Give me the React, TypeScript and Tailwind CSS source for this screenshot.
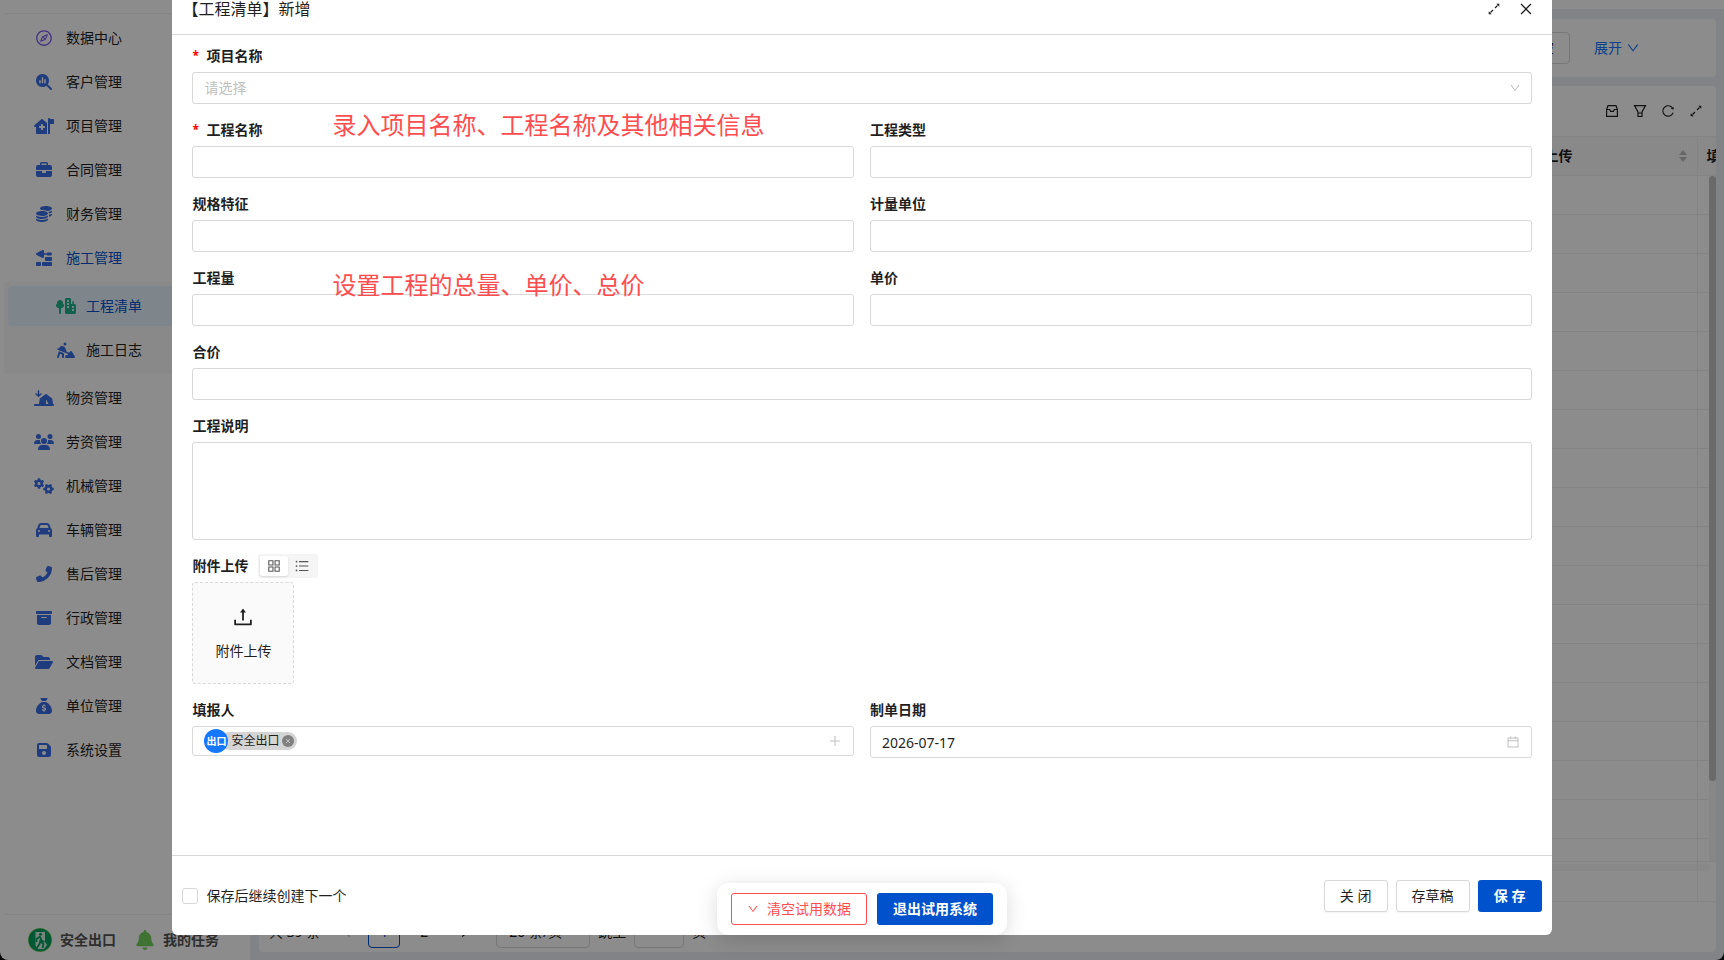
import React from 'react';
import {
  FaMagnifyingGlassChart, FaHouseMedicalFlag, FaBriefcase, FaCoins, FaTrowelBricks, FaTreeCity,
  FaPersonDigging, FaTentArrowDownToLine, FaUsers, FaGears, FaCar, FaPhoneFlip, FaBoxArchive, FaFolderOpen,
  FaSackDollar, FaFloppyDisk, FaBell,
} from 'react-icons/fa6';
import {
  AiOutlineDown, AiOutlineClose, AiOutlinePlus, AiOutlineCalendar, AiOutlineUpload, AiOutlineAppstore,
  AiOutlineUnorderedList, AiOutlineReload, AiOutlineLeft, AiOutlineRight, AiOutlineCompass,
} from 'react-icons/ai';

type Item = { label: string; icon: React.ReactNode; active?: boolean };

const menuTop: Item[] = [
  { label: '数据中心', icon: <AiOutlineCompass className="size-4.5 text-[#7a5af0]" /> },
  { label: '客户管理', icon: <FaMagnifyingGlassChart className="size-4" /> },
  { label: '项目管理', icon: <FaHouseMedicalFlag className="h-4 w-5" /> },
  { label: '合同管理', icon: <FaBriefcase className="size-4" /> },
  { label: '财务管理', icon: <FaCoins className="size-4" /> },
  { label: '施工管理', icon: <FaTrowelBricks className="size-4" />, active: true },
];

const menuBottom: Item[] = [
  { label: '物资管理', icon: <FaTentArrowDownToLine className="h-4 w-5" /> },
  { label: '劳资管理', icon: <FaUsers className="h-4 w-5" /> },
  { label: '机械管理', icon: <FaGears className="h-4 w-5" /> },
  { label: '车辆管理', icon: <FaCar className="size-4" /> },
  { label: '售后管理', icon: <FaPhoneFlip className="size-4" /> },
  { label: '行政管理', icon: <FaBoxArchive className="size-4" /> },
  { label: '文档管理', icon: <FaFolderOpen className="h-4 w-5" /> },
  { label: '单位管理', icon: <FaSackDollar className="size-4" /> },
  { label: '系统设置', icon: <FaFloppyDisk className="size-4" /> },
];

function MenuItem({ item }: { item: Item }) {
  return (
    <a href="#" className={`flex h-11 items-center gap-3 pl-[30px] ${item.active ? 'text-[#0052cc]' : ''}`}>
      <span className="flex w-5 justify-center text-[#3a6ee8]">{item.icon}</span>
      {item.label}
    </a>
  );
}

function ExpandIcon({ className }: { className: string }) {
  return (
    <svg viewBox="0 0 14 14" className={className} fill="none" stroke="currentColor" strokeWidth="1.2">
      <path d="M8 6l2.500-2.500M6 8l-2.500 2.500" />
      <path d="M9.300 1.700h3v3zM4.700 12.300h-3v-3z" fill="currentColor" stroke="none" />
    </svg>
  );
}

function Sidebar() {
  return (
    <nav className="flex w-[250px] shrink-0 flex-col bg-white pl-1">
      <div className="h-[14px] border-b border-[#f0f0f0]" />
      <div className="flex-1 pt-0.5">
        {menuTop.map((m) => <MenuItem key={m.label} item={m} />)}
        <div className="my-0.5 bg-[#fafafa] px-1 py-1">
          <a href="#" className="flex h-10 items-center gap-2.5 rounded bg-[#e6f4ff] pl-12 text-[#0052cc]">
            <FaTreeCity className="h-4 w-5 text-[#1fb28a]" />工程清单
          </a>
          <a href="#" className="mt-1 flex h-10 items-center gap-2.5 pl-12">
            <FaPersonDigging className="h-4 w-5 text-[#3a6ee8]" />施工日志
          </a>
        </div>
        {menuBottom.map((m) => <MenuItem key={m.label} item={m} />)}
      </div>
      <div className="flex h-[46px] items-center border-t border-[#f0f0f0] pb-px pl-6 pt-1.5 font-bold text-[#555]">
        <svg viewBox="0 0 24 24" className="size-6">
          <circle cx="12" cy="12" r="12" fill="#6fcf5a" />
          <circle cx="12" cy="12" r="11.200" fill="#00a060" />
          <path d="M7.500 4h9.500v10l2 3-3 4H10l-2.500-3z" fill="#d9f2e4" />
          <circle cx="12.500" cy="6.300" r="1.500" fill="#00a060" />
          <path d="M12 8.500l1.500 4 3 1.500M12 8.500L8.500 11v3M12.500 12l-1 4-3.500 5M12.500 13.500l3 2.500-1 4" stroke="#00a060" strokeWidth="1.800" fill="none" />
        </svg>
        <span className="ml-2">安全出口</span>
        <FaBell className="ml-5 h-5 w-[18px] text-[#76cf5e]" />
        <span className="ml-[9px]">我的任务</span>
      </div>
    </nav>
  );
}

function Background() {
  return (
    <div className="flex min-w-0 flex-1 flex-col bg-[#edeff5] pb-2 pl-[9px] pr-2">
      <div className="-ml-2 -mr-2 h-[9px] bg-white" />
      <section className="mt-2.5 flex h-[58px] items-center justify-end rounded bg-white pr-[76px]">
        <button className="h-8 rounded border border-[#d9d9d9] px-[15px]">清空</button>
        <a href="#" className="ml-6 flex items-center gap-1 text-[#1677ff]">展开<AiOutlineDown className="size-3.5" /></a>
      </section>
      <section className="mt-[9px] flex min-h-0 flex-1 flex-col rounded bg-white">
        <div className="flex h-[50px] shrink-0 items-center justify-end gap-3.5 pr-[13px]">
          <svg viewBox="0 0 14 14" className="size-3.5" fill="none" stroke="currentColor" strokeWidth="1.200">
            <path d="M1.600 5.500L3 1.600h8l1.400 3.900v6.900H1.600zM1.600 5.500h3l1 1.800h2.800l1-1.800h3" />
          </svg>
          <svg viewBox="0 0 14 14" className="size-3.5" fill="none" stroke="currentColor" strokeWidth="1.200">
            <path d="M1.500 1.600h11L9 8v4.500H5V8zM5 9h4" />
          </svg>
          <AiOutlineReload className="size-3.5" />
          <ExpandIcon className="size-3.5" />
        </div>
        <div className="relative min-h-0 flex-1 overflow-hidden">
          <table className="w-full table-fixed border-collapse">
            <thead>
              <tr className="h-[39px] border-y border-[#f0f0f0] bg-[#fafafa]">
                <th className="border-r border-[#f0f0f0]">
                  <span className="flex items-center justify-end gap-[106px] pr-2.5">
                    <span className="whitespace-nowrap">附件上传</span>
                    <svg viewBox="0 0 8 12" className="h-3 w-2 text-[#bbb]" fill="currentColor"><path d="M4 0l4 5H0zM4 12l4-5H0z" /></svg>
                  </span>
                </th>
                <th className="w-[19px] overflow-hidden whitespace-nowrap pl-[9px] text-left">填报人</th>
              </tr>
            </thead>
            <tbody>
              {Array.from({ length: 18 }, (_, i) => (
                <tr key={i} className="h-[39px] border-b border-[#f0f0f0]"><td className="border-r border-[#f0f0f0]" /><td /></tr>
              ))}
            </tbody>
          </table>
          <div className="absolute bottom-0 right-0 top-10 w-[7px] bg-[#f6f6f6]">
            <div className="h-[605px] rounded bg-[#c1c1c1]" />
          </div>
        </div>
        <div className="flex h-10 shrink-0 border-t border-[#f0f0f0]">
          <div className="flex-1 border-r border-[#f0f0f0] pt-0.5"><div className="h-[7px] bg-[#f7f7f7]" /></div>
          <div className="w-[18px] pr-[7px] pt-0.5"><div className="h-[7px] rounded-r bg-[#f7f7f7]" /></div>
        </div>
        <div className="flex h-[51px] shrink-0 items-center border-t border-[#f0f0f0] pb-1 pl-2.5 pt-3.5">
          <span>共 39 条</span>
          <AiOutlineLeft className="ml-5 size-3.5 text-[#bbb]" />
          <button className="ml-3.5 size-8 rounded border border-[#0052cc] text-[#0052cc]">1</button>
          <span className="ml-5">2</span>
          <AiOutlineRight className="ml-[30px] size-3.5" />
          <button className="ml-6 h-8 w-[94px] rounded border border-[#d9d9d9] pl-3 text-left">20 条/页</button>
          <label htmlFor="jump" className="ml-2">跳至</label>
          <input id="jump" className="mx-2 h-8 w-[50px] rounded border border-[#d9d9d9]" />
          <span>页</span>
        </div>
      </section>
    </div>
  );
}

const boxClass = 'block h-8 w-full rounded-[3px] border border-[#d9d9d9] bg-white px-[11px]';

function Label({ id, text, required }: { id?: string; text: string; required?: boolean }) {
  return (
    <label htmlFor={id} className="flex h-[34px] items-center pt-px font-bold">
      {required && <span className="w-3.5 text-xs text-[#ff0000]">*</span>}
      {text}
    </label>
  );
}

function Field({ id, text, required }: { id: string; text: string; required?: boolean }) {
  return (
    <div>
      <Label id={id} text={text} required={required} />
      <input id={id} className={boxClass} />
    </div>
  );
}

function Dialog() {
  return (
    <div role="dialog" aria-label="【工程清单】新增" className="mx-auto flex w-4/5 flex-1 flex-col overflow-hidden rounded-b-md bg-white">
      <header className="flex h-[35px] items-center border-b border-[#d9d9d9] pb-4 pl-2.5 pr-[18px]">
        <h1 className="flex-1 text-base">【工程清单】新增</h1>
        <button aria-label="全屏"><ExpandIcon className="size-3.5" /></button>
        <button aria-label="关闭窗口" className="ml-[17px]"><AiOutlineClose className="size-4" /></button>
      </header>
      <div className="relative grid flex-1 grid-cols-2 content-start gap-x-4 gap-y-2 px-5 pt-[3px]">
        <div className="col-span-2">
          <Label id="project" text="项目名称" required />
          <div className="relative">
            <select id="project" className={`${boxClass} appearance-none text-[#bfbfbf]`}><option>请选择</option></select>
            <AiOutlineDown className="pointer-events-none absolute right-[11px] top-2.5 size-3 text-[#bfbfbf]" />
          </div>
        </div>
        <Field id="name" text="工程名称" required />
        <Field id="type" text="工程类型" />
        <Field id="spec" text="规格特征" />
        <Field id="unit" text="计量单位" />
        <Field id="amount" text="工程量" />
        <Field id="price" text="单价" />
        <div className="col-span-2"><Field id="total" text="合价" /></div>
        <div className="col-span-2">
          <Label id="desc" text="工程说明" />
          <textarea id="desc" className="block h-[98px] w-full resize-none rounded-[3px] border border-[#d9d9d9] p-2" />
        </div>
        <div className="col-span-2">
          <div className="flex items-center gap-2.5">
            <Label text="附件上传" />
            <div className="mt-0.5 flex rounded-[3px] bg-[#f5f5f5] p-0.5">
              <button aria-label="卡片视图" className="flex h-5 w-7 items-center justify-center rounded-[2px] bg-white text-[#555] shadow-sm"><AiOutlineAppstore className="size-4" /></button>
              <button aria-label="列表视图" className="flex h-5 w-7 items-center justify-center text-[#555]"><AiOutlineUnorderedList className="size-4" /></button>
            </div>
          </div>
          <button className="flex size-[102px] flex-col items-center justify-center gap-3 rounded-[3px] border border-dashed border-[#d9d9d9] bg-[#fafafa]">
            <AiOutlineUpload className="size-6" />附件上传
          </button>
        </div>
        <div>
          <Label text="填报人" />
          <div className="flex h-[30px] items-center rounded-[3px] border border-[#d9d9d9] px-[11px]">
            <span className="z-10 flex size-6 items-center justify-center rounded-full bg-[#1677ff] text-[10px] font-bold text-white">出口</span>
            <span className="-ml-2 flex h-[18px] items-center gap-[3px] rounded-full bg-[#d4d4d4] pl-[11px] pr-[3px] text-xs">
              安全出口
              <button aria-label="移除" className="flex size-3 items-center justify-center rounded-full bg-[#808080] text-white"><AiOutlineClose className="size-1.5" /></button>
            </span>
            <button aria-label="添加" className="ml-auto text-[#bfbfbf]"><AiOutlinePlus className="size-3.5" /></button>
          </div>
        </div>
        <div>
          <Label id="date" text="制单日期" />
          <div className="relative">
            <input id="date" defaultValue="2026-07-17" className={boxClass} />
            <AiOutlineCalendar className="absolute right-3 top-[9px] size-3.5 text-[#bfbfbf]" />
          </div>
        </div>
        <p className="absolute left-40 top-[72px] text-2xl leading-9 text-[#ff4d4f]">录入项目名称、工程名称及其他相关信息</p>
        <p className="absolute left-40 top-[232px] text-2xl leading-9 text-[#ff4d4f]">设置工程的总量、单价、总价</p>
      </div>
      <footer className="flex h-20 items-center gap-2 border-t border-[#d9d9d9] px-2.5">
        <input id="next" type="checkbox" className="size-4 appearance-none rounded-[3px] border border-[#d9d9d9] bg-white" />
        <label htmlFor="next" className="flex-1">保存后继续创建下一个</label>
        <button className="h-8 w-16 rounded-[3px] border border-[#d9d9d9] shadow-xs">关 闭</button>
        <button className="h-8 rounded-[3px] border border-[#d9d9d9] px-[15px] shadow-xs">存草稿</button>
        <button className="h-8 w-16 rounded-[3px] bg-[#0052cc] font-bold text-white">保 存</button>
      </footer>
    </div>
  );
}

export default function App() {
  return (
    <div className="relative h-screen overflow-hidden bg-black font-['Noto_Sans','Noto_Sans_CJK_SC',sans-serif] text-sm text-[#1f1f1f]">
      <div className="flex h-full overflow-hidden rounded-b-lg">
        <Sidebar />
        <Background />
      </div>
      <div className="absolute inset-0 flex flex-col bg-black/45 pb-[25px]">
        <Dialog />
      </div>
      <div className="absolute bottom-[25px] left-1/2 flex -translate-x-1/2 gap-2.5 rounded-xl bg-white px-3.5 py-2.5 shadow-[0_4px_20px_rgba(0,0,0,0.15)]">
        <button className="flex h-8 items-center gap-2 rounded-[3px] border border-[#ff4d4f] px-[15px] text-[#ff4d4f]">
          <AiOutlineDown className="size-3" />清空试用数据
        </button>
        <button className="h-8 rounded-[3px] bg-[#0052cc] px-4 font-bold text-white">退出试用系统</button>
      </div>
    </div>
  );
}
